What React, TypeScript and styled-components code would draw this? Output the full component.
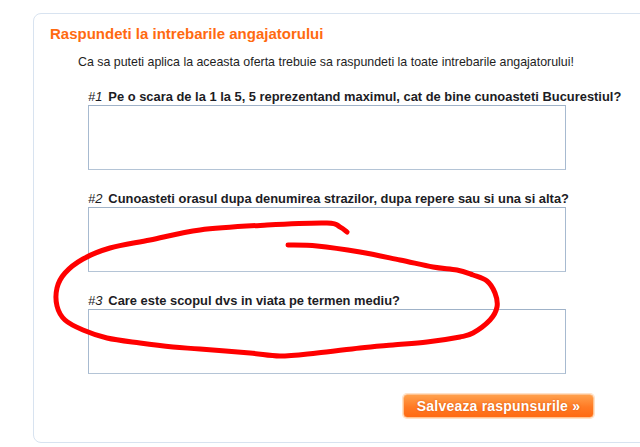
import React from "react";
import styled, { createGlobalStyle } from "styled-components";

const GlobalStyle = createGlobalStyle`
  html, body {
    margin: 0;
    padding: 0;
    background: #ffffff;
    overflow: hidden;
  }
  body {
    font-family: "Liberation Sans", Arial, sans-serif;
  }
`;

const Page = styled.div`
  position: relative;
  width: 640px;
  height: 447px;
  padding: 13px 0 0 33px;
  box-sizing: border-box;
  overflow: hidden;
`;

const Panel = styled.section`
  width: 660px;
  height: 430px;
  box-sizing: border-box;
  border: 1.5px solid #d8e3f0;
  border-radius: 8px;
  padding: 10px 0 0 16px;
  display: flex;
  flex-direction: column;
`;

const Title = styled.h2`
  margin: 0;
  font-size: 15px;
  line-height: 19px;
  font-weight: bold;
  color: #ff6a10;
`;

const Intro = styled.p`
  margin: 11px 0 0 28px;
  font-size: 12.4px;
  line-height: 16px;
  color: #1e1e1e;
`;

const QuestionList = styled.div`
  margin: 19px 0 0 38px;
  width: 478px;
  display: flex;
  flex-direction: column;
  gap: 21px;
`;

const Question = styled.div`
  display: flex;
  flex-direction: column;
`;

const Label = styled.label`
  font-size: 12.9px;
  line-height: 16px;
  font-weight: bold;
  color: #1c1c24;
  white-space: nowrap;
`;

const Num = styled.span`
  font-weight: normal;
  font-style: italic;
  margin-right: 6px;
`;

const Answer = styled.textarea`
  display: block;
  width: 478px;
  height: 65px;
  box-sizing: border-box;
  margin: 0;
  resize: none;
  border: 1px solid #a7bad0;
  border-top-color: #9fb2c8;
  border-bottom-color: #b4c4d6;
  background: #ffffff;
  outline: none;
`;

const Actions = styled.div`
  width: 544px;
  margin-top: 20px;
  display: flex;
  justify-content: flex-end;
`;

const SaveButton = styled.button`
  width: 191px;
  height: 24px;
  padding: 0;
  border: 1px solid #ffc28f;
  border-radius: 4px;
  background: linear-gradient(#ffa04c, #ff7a24 55%, #ff6a12);
  color: #ffffff;
  font-family: "Liberation Sans", Arial, sans-serif;
  font-size: 14px;
  font-weight: bold;
  letter-spacing: 0.2px;
  text-shadow: 0 0 2px rgba(190, 70, 0, 0.6);
  box-shadow: 0 0 0 1px #ffe2c8;
  cursor: pointer;
`;

const Scribble = styled.svg`
  position: absolute;
  left: 0;
  top: 0;
  pointer-events: none;
`;

const questions = [
  "Pe o scara de la 1 la 5, 5 reprezentand maximul, cat de bine cunoasteti Bucurestiul?",
  "Cunoasteti orasul dupa denumirea strazilor, dupa repere sau si una si alta?",
  "Care este scopul dvs in viata pe termen mediu?",
];

// hand-drawn loop around the third question
const loop: [number, number][] = [
  [288, 245], [317, 246], [360, 252], [400, 260], [433, 267], [457, 270],
  [473, 275], [487, 281], [495, 293], [497, 307], [490, 320], [473, 333],
  [460, 337], [427, 342], [393, 345], [360, 348], [317, 353], [280, 356],
  [250, 353], [200, 349], [173, 347], [140, 343], [107, 338], [83, 330],
  [65, 320], [57, 306], [57, 288], [65, 273], [83, 259], [110, 248],
  [150, 240], [200, 230], [267, 225], [327, 223], [340, 227], [347, 232],
];

// Catmull-Rom through the points, emitted as cubic Béziers
function smoothPath(pts: [number, number][]) {
  let d = `M${pts[0][0]},${pts[0][1]}`;
  for (let i = 0; i < pts.length - 1; i++) {
    const p0 = pts[i - 1] || pts[i];
    const p1 = pts[i];
    const p2 = pts[i + 1];
    const p3 = pts[i + 2] || p2;
    const c1x = p1[0] + (p2[0] - p0[0]) / 6;
    const c1y = p1[1] + (p2[1] - p0[1]) / 6;
    const c2x = p2[0] - (p3[0] - p1[0]) / 6;
    const c2y = p2[1] - (p3[1] - p1[1]) / 6;
    d += ` C${c1x.toFixed(1)},${c1y.toFixed(1)} ${c2x.toFixed(1)},${c2y.toFixed(1)} ${p2[0]},${p2[1]}`;
  }
  return d;
}

export default function App() {
  return (
    <Page>
      <GlobalStyle />
      <Panel>
        <Title>Raspundeti la intrebarile angajatorului</Title>
        <Intro>
          Ca sa puteti aplica la aceasta oferta trebuie sa raspundeti la toate
          intrebarile angajatorului!
        </Intro>
        <QuestionList>
          {questions.map((q, i) => (
            <Question key={i}>
              <Label htmlFor={`q${i + 1}`}>
                <Num>#{i + 1}</Num>
                {q}
              </Label>
              <Answer id={`q${i + 1}`} />
            </Question>
          ))}
        </QuestionList>
        <Actions>
          <SaveButton>Salveaza raspunsurile »</SaveButton>
        </Actions>
      </Panel>
      <Scribble width="640" height="447" viewBox="0 0 640 447">
        <path
          d={smoothPath(loop)}
          fill="none"
          stroke="#ff0000"
          strokeWidth="5"
          strokeLinejoin="round"
          strokeLinecap="round"
        />
      </Scribble>
    </Page>
  );
}
